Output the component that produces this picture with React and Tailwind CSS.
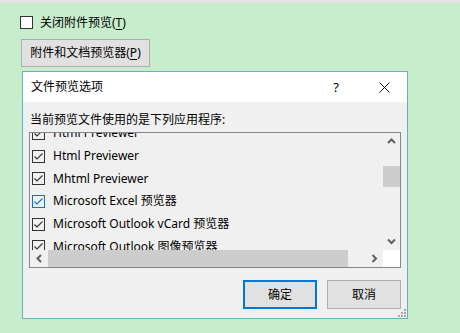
import React from "react";

const font = "font-['Noto_Sans','Noto_Sans_CJK_SC',sans-serif]";

function Check({ checked = true, blue = false, white = false }) {
  const border = blue ? "border-[#0078d7]" : "border-[#333333]";
  const stroke = blue ? "#0078d7" : "#333333";
  return (
    <div
      className={`w-[13px] h-[13px] shrink-0 border ${border} ${white ? "bg-white" : ""} flex items-center justify-center`}
    >
      {checked && (
        <svg width="11" height="11" viewBox="0 0 11 11">
          <polyline points="1.5,5.5 4,8 9.5,2.5" fill="none" stroke={stroke} strokeWidth="1.1" />
        </svg>
      )}
    </div>
  );
}

function Chevron({ dir }) {
  const pts = {
    up: "1,5 4.5,1.5 8,5",
    down: "1,1.5 4.5,5 8,1.5",
    left: "5,1 1.5,4.5 5,8",
    right: "1.5,1 5,4.5 1.5,8",
  }[dir];
  const vertical = dir === "up" || dir === "down";
  return (
    <svg width={vertical ? 9 : 7} height={vertical ? 7 : 9} viewBox={vertical ? "0 0 9 7" : "0 0 7 9"}>
      <polyline points={pts} fill="none" stroke="#606060" strokeWidth="2" />
    </svg>
  );
}

const rows = [
  { label: "Html Previewer" },
  { label: "Html Previewer" },
  { label: "Mhtml Previewer" },
  { label: "Microsoft Excel 预览器", blue: true },
  { label: "Microsoft Outlook vCard 预览器" },
  { label: "Microsoft Outlook 图像预览器" },
];

export default function App() {
  return (
    <div className={`w-[460px] h-[333px] bg-[#c7edcc] overflow-hidden text-black text-[12px] leading-[16px] ${font}`}>
      <div className="h-[3px] bg-[#e4e4e4]" />
      <div className="flex items-center gap-[7px] ml-[20px] mt-[13px] h-[13px]">
        <Check checked={false} white />
        <span>
          关闭附件预览(<span className="underline underline-offset-2">T</span>)
        </span>
      </div>
      <div className="ml-[21px] mt-[10px] w-[129px] h-[28px] bg-[#e1e1e1] border border-[#adadad] flex items-center justify-center">
        <span>
          附件和文档预览器(<span className="underline underline-offset-2">P</span>)
        </span>
      </div>
      <div className="ml-[22px] mt-[4px] w-[386px] h-[248px] border border-[#64b1c3] flex flex-col">
        <div className="h-[30px] bg-white flex items-center pl-[8px] shrink-0">
          <span className="flex-1">文件预览选项</span>
          <span className="w-[12px] text-center text-[13px] mr-[37px]">?</span>
          <svg width="11" height="11" viewBox="0 0 11 11" className="mr-[17px]">
            <line x1="0.5" y1="0.5" x2="10.5" y2="10.5" stroke="#111" strokeWidth="1" />
            <line x1="10.5" y1="0.5" x2="0.5" y2="10.5" stroke="#111" strokeWidth="1" />
          </svg>
        </div>
        <div className="flex-1 bg-[#f0f0f0] px-[6px] pt-[10px] relative">
          <div className="h-[16px] pl-[1px]">当前预览文件使用的是下列应用程序:</div>
          <div className="mt-[4px] h-[136px] border border-[#828790] flex flex-col">
            <div className="flex h-[117px]">
              <div className="flex-1 overflow-hidden">
                <div className="-mt-[11px]">
                  {rows.map((r, i) => (
                    <div key={i} className="h-[22.7px] flex items-center pl-[2px] gap-[8px] whitespace-nowrap">
                      <Check blue={r.blue} />
                      <span>{r.label}</span>
                    </div>
                  ))}
                </div>
              </div>
              <div className="w-[17px] bg-[#f0f0f0] flex flex-col">
                <div className="h-[17px] flex items-center justify-center">
                  <Chevron dir="up" />
                </div>
                <div className="mt-[16px] h-[21px] bg-[#cdcdcd]" />
                <div className="flex-1" />
                <div className="h-[17px] flex items-center justify-center">
                  <Chevron dir="down" />
                </div>
              </div>
            </div>
            <div className="flex h-[17px]">
              <div className="flex-1 bg-[#f0f0f0] flex">
                <div className="w-[18px] flex items-center justify-center">
                  <Chevron dir="left" />
                </div>
                <div className="w-[300px] bg-[#cdcdcd]" />
                <div className="flex-1" />
                <div className="w-[17px] flex items-center justify-center">
                  <Chevron dir="right" />
                </div>
              </div>
              <div className="w-[17px] bg-white" />
            </div>
          </div>
          <div className="mt-[12px] flex justify-end gap-[10px]">
            <div className="w-[74px] h-[29px] bg-[#e1e1e1] border-2 border-[#0078d7] flex items-center justify-center">
              确定
            </div>
            <div className="w-[74px] h-[29px] bg-[#e1e1e1] border border-[#adadad] flex items-center justify-center">
              取消
            </div>
          </div>
          <svg width="8" height="8" viewBox="0 0 8 8" className="absolute right-[1px] bottom-[1px]">
            <rect x="6" y="0" width="2" height="2" fill="#a8a8a8" />
            <rect x="3" y="3" width="2" height="2" fill="#a8a8a8" />
            <rect x="6" y="3" width="2" height="2" fill="#a8a8a8" />
            <rect x="0" y="6" width="2" height="2" fill="#a8a8a8" />
            <rect x="3" y="6" width="2" height="2" fill="#a8a8a8" />
            <rect x="6" y="6" width="2" height="2" fill="#a8a8a8" />
          </svg>
        </div>
      </div>
    </div>
  );
}
